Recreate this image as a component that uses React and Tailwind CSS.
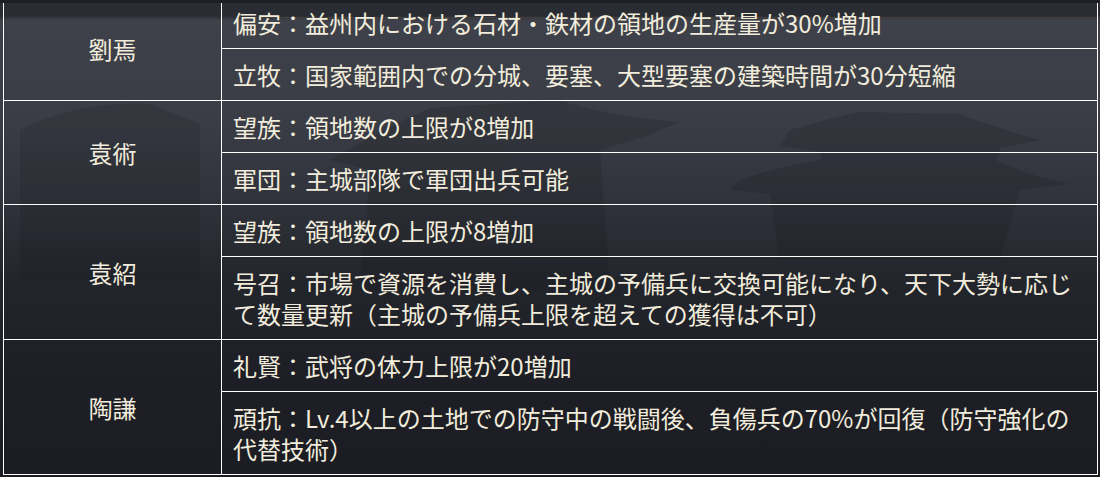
const rows = [
  {
    name: '劉焉',
    items: [
      '偏安：益州内における石材・鉄材の領地の生産量が30%増加',
      '立牧：国家範囲内での分城、要塞、大型要塞の建築時間が30分短縮',
    ],
  },
  {
    name: '袁術',
    items: ['望族：領地数の上限が8増加', '軍団：主城部隊で軍団出兵可能'],
  },
  {
    name: '袁紹',
    items: [
      '望族：領地数の上限が8増加',
      '号召：市場で資源を消費し、主城の予備兵に交換可能になり、天下大勢に応じて数量更新（主城の予備兵上限を超えての獲得は不可）',
    ],
  },
  {
    name: '陶謙',
    items: [
      '礼賢：武将の体力上限が20増加',
      '頑抗：Lv.4以上の土地での防守中の戦闘後、負傷兵の70%が回復（防守強化の代替技術）',
    ],
  },
]

// faint castle roofs behind the table
function Castle() {
  return (
    <svg className="absolute inset-0 h-full w-full" viewBox="0 0 1100 477" preserveAspectRatio="none">
      <g fill="#1a1c22" opacity="0.22">
        <path d="M330 160 Q380 130 430 108 L560 100 Q600 115 680 122 L650 135 L600 150 L610 290 L360 290 L370 170 Z" />
        <path d="M790 130 Q830 118 860 112 L960 114 Q990 126 1040 140 L1000 148 L990 200 L830 200 L820 152 L780 146 Z" />
        <path d="M740 180 Q780 166 820 160 L1000 162 Q1030 176 1070 184 L1020 190 L1000 260 L780 260 L770 194 L730 190 Z" />
      </g>
      <g fill="#15161b" opacity="0.15">
        <path d="M20 130 Q80 100 150 104 L200 124 L200 280 L20 280 Z" />
      </g>
      <rect x="240" y="17" width="860" height="1" fill="#5a4a3c" opacity="0.5" />
    </svg>
  )
}

export default function App() {
  return (
    <div className="relative h-[477px] w-[1100px] overflow-hidden bg-[linear-gradient(180deg,#2a2c33_0px,#2a2c33_16px,#3e4149_20px,#3a3d45_120px,#30333b_200px,#23252c_280px,#1e1f26_380px,#1c1d23_477px)] font-['Noto_Sans_CJK_JP','Noto_Sans',sans-serif] text-[#f1ecdc]">
      <Castle />
      <div className="relative z-10 h-[3px] bg-[#1e1f24]" />
      <div className="relative -mt-[7px] px-[3px]">
        <table className="w-[1095px] table-fixed border-collapse text-[24px] leading-[31px]">
          <colgroup>
            <col className="w-[218px]" />
            <col />
          </colgroup>
          <tbody>
            {rows.map((r) =>
              r.items.map((t, i) => (
                <tr key={r.name + i}>
                  {i === 0 && (
                    <td rowSpan={r.items.length} className="border border-white text-center align-middle">
                      {r.name}
                    </td>
                  )}
                  <td className="border border-white py-[10px] pl-[11px] pr-[10px]">{t}</td>
                </tr>
              ))
            )}
          </tbody>
        </table>
      </div>
    </div>
  )
}
